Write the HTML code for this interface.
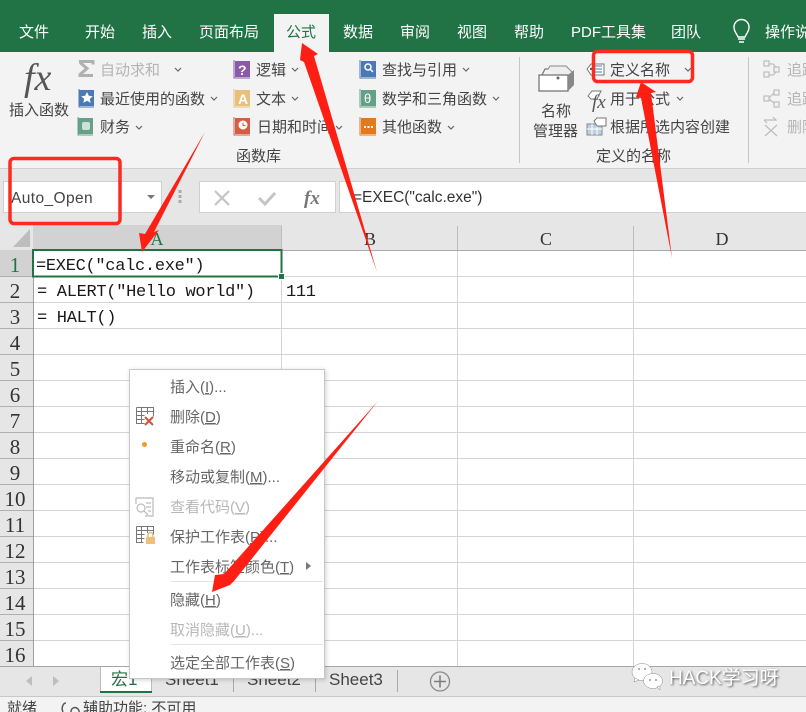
<!DOCTYPE html>
<html lang="zh"><head><meta charset="utf-8"><title>Excel</title>
<style>
html,body{margin:0;padding:0;width:806px;height:712px;overflow:hidden;background:#fff}
svg{display:block;position:absolute;left:0;top:0}
text{font-family:"Liberation Sans","Noto Sans CJK SC",sans-serif;font-size:15px;fill:#444;white-space:pre}
.tab{fill:#fff}
.dis{fill:#b4b4b4}
.m{font-family:"Liberation Mono",monospace;font-size:17px;fill:#1a1a1a;letter-spacing:-.3px}
.h{font-family:"Liberation Serif",serif;font-size:18px;fill:#333;text-anchor:middle}
.r{font-family:"Liberation Serif",serif;font-size:21px;fill:#333;text-anchor:middle}
.c{fill:none;stroke:#666;stroke-width:1.2}
</style></head><body>
<svg width="806" height="712" viewBox="0 0 806 712" xmlns="http://www.w3.org/2000/svg">
<!-- title / tabs -->
<rect width="806" height="52" fill="#217346"/>
<rect x="274" y="14" width="55" height="38" fill="#f3f3f3"/>
<text class="tab" x="19" y="37">文件</text><text class="tab" x="85" y="37">开始</text><text class="tab" x="142" y="37">插入</text><text class="tab" x="199" y="37">页面布局</text>
<text x="286" y="37" style="fill:#217346">公式</text>
<text class="tab" x="343" y="37">数据</text><text class="tab" x="400" y="37">审阅</text><text class="tab" x="457" y="37">视图</text><text class="tab" x="514" y="37">帮助</text><text class="tab" x="571" y="37">PDF工具集</text><text class="tab" x="671" y="37">团队</text><text class="tab" x="765" y="37">操作说</text>
<path d="M738 37c-1-3-4-5-4-10a7.500 7.500 0 0 1 15 0c0 5-3 7-4 10zM738 39h7M739 42h5" fill="none" stroke="#fff" stroke-width="1.400"/>
<!-- ribbon -->
<rect y="52" width="806" height="116" fill="#f3f3f3"/>
<rect y="168" width="806" height="57" fill="#e6e6e6"/><rect y="168" width="806" height="1" fill="#cfcfcf"/>
<text x="24" y="90" style="font-family:'Liberation Serif',serif;font-style:italic;font-size:38px;fill:#555">fx</text>
<text x="9" y="115">插入函数</text>
<path d="M79 61.500h14v3M93 75.500H80v-1l7-6-7-6" fill="none" stroke="#b0b0b0" stroke-width="3"/>
<text class="dis" x="100" y="75">自动求和</text><path class="c" d="M175 68l3 3 3-3"/>
<rect x="79" y="90" width="15" height="16" fill="#4a7ab5"/><path d="M79 89v18h15" fill="none" stroke="#4a7ab5"/><path d="M87 92l1.800 3.800 4 .4-3 2.700.9 4-3.700-2.100-3.700 2.100.9-4-3-2.700 4-.4z" fill="#fff"/>
<text x="100" y="104">最近使用的函数</text><path class="c" d="M211 97l3 3 3-3"/>
<rect x="78" y="118" width="15" height="16" fill="#65a188"/><path d="M78 117v18h15" fill="none" stroke="#65a188"/><rect x="82" y="122" width="8" height="8" rx="2" fill="#cfe2da"/>
<text x="100" y="132">财务</text><path class="c" d="M136 126l3 3 3-3"/>

<rect x="235" y="61" width="15" height="16" fill="#8a5aa8"/><path d="M234 60v18h16" fill="none" stroke="#8a5aa8"/><text x="238" y="75" style="font-size:14px;font-weight:bold;fill:#fff">?</text>
<text x="256" y="75">逻辑</text><path class="c" d="M292 68l3 3 3-3"/>
<rect x="235" y="90" width="15" height="16" fill="#e9bf7c"/><path d="M234 89v18h16" fill="none" stroke="#e9bf7c"/><text x="238" y="104" style="font-size:14px;font-weight:bold;fill:#fff">A</text>
<text x="256" y="104">文本</text><path class="c" d="M292 97l3 3 3-3"/>
<rect x="235" y="118" width="15" height="16" fill="#d25f45"/><path d="M234 117v18h16" fill="none" stroke="#d25f45"/><circle cx="243" cy="125" r="4.500" fill="#fff"/><path d="M243 122.500v3h2.500" fill="none" stroke="#d25f45"/>
<text x="257" y="132">日期和时间</text><path class="c" d="M336 126l3 3 3-3"/>
<text x="236" y="161">函数库</text>

<rect x="361" y="61" width="15" height="16" fill="#4a7ab5"/><path d="M360 60v18h16" fill="none" stroke="#4a7ab5"/><circle cx="368" cy="67" r="3" fill="none" stroke="#fff" stroke-width="1.500"/><path d="M370 69l3 3" stroke="#fff" stroke-width="1.500"/>
<text x="382" y="75">查找与引用</text><path class="c" d="M463 68l3 3 3-3"/>
<rect x="361" y="90" width="15" height="16" fill="#65a188"/><path d="M360 89v18h16" fill="none" stroke="#65a188"/><text x="364" y="103" style="font-size:13px;fill:#fff">θ</text>
<text x="382" y="104">数学和三角函数</text><path class="c" d="M493 97l3 3 3-3"/>
<rect x="361" y="118" width="15" height="16" fill="#e2791f"/><path d="M360 117v18h16" fill="none" stroke="#e2791f"/><path d="M364 127h9" stroke="#fff" stroke-width="2" stroke-dasharray="2 1.500"/>
<text x="382" y="132">其他函数</text><path class="c" d="M448 126l3 3 3-3"/>
<rect x="519" y="57" width="1" height="106" fill="#c6c6c6"/>
<rect x="748" y="57" width="1" height="106" fill="#c6c6c6"/>
<!-- name manager -->
<path d="M542 75l3-6h18l5 5v7" fill="none" stroke="#777" stroke-width="1.200"/>
<path d="M548 69l2-3h16l7 7v10l-3 3" fill="#eee" stroke="#888"/>
<rect x="539" y="75" width="29" height="16" fill="#fff" stroke="#777" stroke-width="1.300"/><path d="M568 75l6-5v15l-6 6z" fill="#888"/><circle cx="558" cy="78" r="1.500" fill="#666"/>
<text x="541" y="116">名称</text><text x="533" y="136">管理器</text>
<text x="596" y="161">定义的名称</text>
<path d="M587 69l4-5h13v11h-13z" fill="#fff" stroke="#777"/><circle cx="591" cy="69" r="1.200" fill="#555"/><path d="M595 66h7M595 69h7M595 72h7" stroke="#3f7fbf"/>
<text x="610" y="75">定义名称</text><path class="c" d="M685 68l3 3 3-3"/>
<path d="M588 96l4-5h9l-4 8h-6z" fill="#fff" stroke="#777"/>
<text x="592" y="108" style="font-family:'Liberation Serif',serif;font-style:italic;font-size:19px;fill:#555">fx</text>
<text x="610" y="104">用于公式</text><path class="c" d="M677 97l3 3 3-3"/>
<rect x="587" y="124" width="15" height="11" fill="#bcd0e4" stroke="#888"/><path d="M592 124v11M597 124v11M587 129h15" stroke="#fff"/>
<path d="M594 121l3-3h9v8h-9z" fill="#fff" stroke="#777"/>
<text x="610" y="132">根据所选内容创建</text>
<g fill="none" stroke="#bdbdbd" stroke-width="1.200">
<rect x="764" y="61" width="5" height="5"/><rect x="764" y="72" width="5" height="5"/><rect x="774" y="67" width="5" height="5"/><path d="M769 64h4l3 3M769 75h4l3-3"/>
<rect x="764" y="96" width="5" height="5"/><rect x="774" y="90" width="5" height="5"/><rect x="774" y="102" width="5" height="5"/><path d="M769 98l5-5M769 99l5 4"/>
<path d="M764 120h12l-3-3M764 120l3 3M765 125l12 11M777 125l-12 11"/>
</g>
<text class="dis" x="787" y="75">追踪</text><text class="dis" x="787" y="104">追踪</text><text class="dis" x="787" y="132">删除</text>
<!-- formula bar -->
<rect x="3.500" y="181.500" width="158" height="31" fill="#fff" stroke="#d0d0d0"/>
<text x="11" y="203" style="font-size:15.500px;letter-spacing:.4px;fill:#444">Auto_Open</text>
<path d="M147 195h8l-4 4z" fill="#777"/>
<path d="M180 190v3M180 195v3M180 200v3" stroke="#aaa" stroke-width="3"/>
<rect x="199.500" y="181.500" width="136" height="31" fill="#fff" stroke="#d0d0d0"/>
<path d="M215 191l14 14M229 191l-14 14" stroke="#c4c4c4" stroke-width="2.200"/>
<path d="M259 198l6 6 10-11" fill="none" stroke="#c4c4c4" stroke-width="3"/>
<text x="304" y="204" style="font-family:'Liberation Serif',serif;font-style:italic;font-weight:bold;font-size:19px;fill:#777">fx</text>
<rect x="339.500" y="181.500" width="470" height="31" fill="#fff" stroke="#d0d0d0"/>
<text x="353" y="202" style="font-size:15.500px;fill:#333">=EXEC("calc.exe")</text>
<!-- headers -->
<rect y="225" width="806" height="25" fill="#e6e6e6"/>
<rect x="33" y="225" width="249" height="25" fill="#d2d2d2"/>
<path d="M13 247l17-18v18z" fill="#bdbdbd"/>
<rect x="33" y="249" width="249" height="2" fill="#217346"/>
<rect x="33" y="250" width="1" height="417" fill="#9f9f9f"/>
<rect x="0" y="250" width="33" height="417" fill="#e6e6e6"/>
<rect x="0" y="250" width="33" height="27" fill="#d2d2d2"/>
<rect x="34" y="250" width="772" height="1" fill="#aaa"/>
<path d="M281.500 226v24M457.500 226v24M633.500 226v24" stroke="#bdbdbd"/>
<text class="h" x="157" y="245" style="fill:#217346">A</text><text class="h" x="370" y="245">B</text><text class="h" x="546" y="245">C</text><text class="h" x="722" y="245">D</text>
<!-- grid -->
<path d="M34 276.500H806M34 302.500H806M34 328.500H806M34 354.500H806M34 380.500H806M34 406.500H806M34 432.500H806M34 458.500H806M34 484.500H806M34 510.500H806M34 536.500H806M34 562.500H806M34 588.500H806M34 614.500H806M34 640.500H806M281.500 251V667M457.500 251V667M633.500 251V667" stroke="#d4d4d4" fill="none"/>
<path d="M0 276.500H33M0 302.500H33M0 328.500H33M0 354.500H33M0 380.500H33M0 406.500H33M0 432.500H33M0 458.500H33M0 484.500H33M0 510.500H33M0 536.500H33M0 562.500H33M0 588.500H33M0 614.500H33M0 640.500H33" stroke="#b0b0b0" fill="none"/>
<text class="r" x="15" y="272" style="fill:#217346">1</text><text class="r" x="15" y="298">2</text><text class="r" x="15" y="324">3</text><text class="r" x="15" y="350">4</text><text class="r" x="15" y="376">5</text><text class="r" x="15" y="402">6</text><text class="r" x="15" y="428">7</text><text class="r" x="15" y="454">8</text><text class="r" x="15" y="480">9</text>
<text class="r" x="15" y="506">10</text><text class="r" x="15" y="532">11</text><text class="r" x="15" y="558">12</text><text class="r" x="15" y="584">13</text><text class="r" x="15" y="610">14</text><text class="r" x="15" y="636">15</text><text class="r" x="15" y="662">16</text>
<text class="m" x="36" y="270">=EXEC("calc.exe")</text>
<text class="m" x="37" y="296">= ALERT("Hello world")</text>
<text class="m" x="286" y="296">111</text>
<text class="m" x="37" y="322">= HALT()</text>
<rect x="33" y="250" width="248.500" height="26.500" fill="none" stroke="#217346" stroke-width="2"/>
<rect x="278.500" y="273.500" width="6" height="6" fill="#217346" stroke="#fff"/>
<!-- sheet tabs -->
<rect y="666" width="806" height="31" fill="#e6e6e6"/><rect y="666" width="806" height="1" fill="#a6a6a6"/>
<path d="M32 676l-6 5 6 5zM53 676l6 5-6 5z" fill="#bdbdbd"/>
<rect x="100" y="667" width="52" height="24" fill="#fff"/><rect x="100" y="691" width="52" height="2" fill="#217346"/><path d="M100.500 667v24M151.500 667v24" stroke="#bdbdbd"/>
<text x="111" y="685" style="font-size:17px;fill:#217346">宏1</text>
<text x="165" y="685" style="font-size:17px">Sheet1</text><text x="247" y="685" style="font-size:17px">Sheet2</text><text x="329" y="685" style="font-size:17px">Sheet3</text>
<path d="M233.500 670v22M315.500 670v22M397.500 670v22" stroke="#a8a8a8"/>
<circle cx="440" cy="681.500" r="9.500" fill="none" stroke="#8a8a8a" stroke-width="1.300"/><path d="M434 681.500h12M440 675.500v12" stroke="#7d7d7d" stroke-width="1.600"/>
<!-- status -->
<rect y="696" width="806" height="16" fill="#f3f3f3"/><rect y="696" width="806" height="1" fill="#c8c8c8"/>
<text x="7" y="713">就绪</text>
<path d="M63 712c-2-4 0-9 3-9M71 712c0-4 4-6 7-3 2 2 1 5 1 5" fill="none" stroke="#555" stroke-width="1.500"/>
<text x="83" y="713">辅助功能: 不可用</text>
<!-- context menu -->
<rect x="129.500" y="369.500" width="195" height="309" fill="#fff" stroke="#c8c8c8" style="filter:drop-shadow(1px 1px 2px rgba(0,0,0,.18))"/>
<text x="170" y="392" style="fill:#666">插入(<tspan text-decoration="underline">I</tspan>)...</text>
<text x="170" y="422" style="fill:#666">删除(<tspan text-decoration="underline">D</tspan>)</text>
<text x="170" y="452" style="fill:#666">重命名(<tspan text-decoration="underline">R</tspan>)</text>
<text x="170" y="482" style="fill:#666">移动或复制(<tspan text-decoration="underline">M</tspan>)...</text>
<text x="170" y="512" style="fill:#b8b8b8">查看代码(<tspan text-decoration="underline">V</tspan>)</text>
<text x="170" y="542" style="fill:#666">保护工作表(<tspan text-decoration="underline">P</tspan>)...</text>
<text x="170" y="572" style="fill:#666">工作表标签颜色(<tspan text-decoration="underline">T</tspan>)</text>
<text x="170" y="605" style="fill:#666">隐藏(<tspan text-decoration="underline">H</tspan>)</text>
<text x="170" y="635" style="fill:#b8b8b8">取消隐藏(<tspan text-decoration="underline">U</tspan>)...</text>
<text x="170" y="668" style="fill:#666">选定全部工作表(<tspan text-decoration="underline">S</tspan>)</text>
<path d="M171 581.500H323M171 644.500H323" stroke="#e2e2e2"/>
<path d="M306 562l5 4-5 4z" fill="#777"/>
<g fill="none" stroke="#777">
<path d="M136.500 407.500h17v9M136.500 407.500v16h8M136.500 411.500h17M136.500 415.500h8M136.500 419.500h8M141.500 408v15M147.500 408v6"/>
<path d="M145 417l8 8M153 417l-8 8" stroke="#d2533c" stroke-width="2"/>
</g>
<circle cx="144.500" cy="444.500" r="2.500" fill="#f59a23"/>
<g fill="none" stroke="#bbb" stroke-width="1.200">
<path d="M136 498h17v18h-8"/><path d="M136 498v6M146 503h5M146 507h5M148 511h3"/><circle cx="141" cy="508" r="4"/><path d="M144 511l4 4"/>
</g>
<g fill="none" stroke="#777">
<path d="M136.500 526.500h17v8M136.500 526.500v16h7M136.500 530.500h17M136.500 534.500h8M136.500 538.500h8M141.500 527v15M147.500 527v6"/>
</g>
<rect x="146" y="537" width="9" height="7" fill="#efbe7b"/><path d="M148 537v-2a2.500 2.500 0 0 1 5 0v2" fill="none" stroke="#e0ae6b" stroke-width="1.300"/>
<!-- watermark -->
<g fill="#fff" stroke="#888" stroke-width=".5">
<ellipse cx="642" cy="672" rx="10" ry="8.500"/><path d="M635 678l-1 4 5-2z"/>
<ellipse cx="653" cy="681" rx="9.500" ry="7.500"/><path d="M657 687l3 3v-4z"/>
</g>
<g fill="#999"><circle cx="639" cy="669" r="1"/><circle cx="645" cy="669" r="1"/><circle cx="650" cy="680" r="1"/><circle cx="656" cy="680" r="1"/></g>
<text x="669" y="684" style="font-size:19px;fill:#fff;filter:drop-shadow(1px 1px 1px #555)">HACK学习呀</text>
<!-- red annotations -->
<g fill="#fe1f14">
<path d="M302 43L318 54 314 56 377 272 304 62 300 60z"/>
<path d="M142 252L139 233 145 234 205 132 154 232 159 230z"/>
<path d="M641 82L656 92 651 93 672 258 641 98 636 97z"/>
<path d="M378 401L234 581 230 585 212 592 215 575 224 574z"/>
</g>
<rect x="10" y="158.500" width="110" height="65" rx="4" fill="none" stroke="#fe2a20" stroke-width="3.500"/>
<rect x="593.500" y="51.500" width="99" height="30" rx="4" fill="none" stroke="#fe2a20" stroke-width="3.500"/>
</svg>
</body></html>
